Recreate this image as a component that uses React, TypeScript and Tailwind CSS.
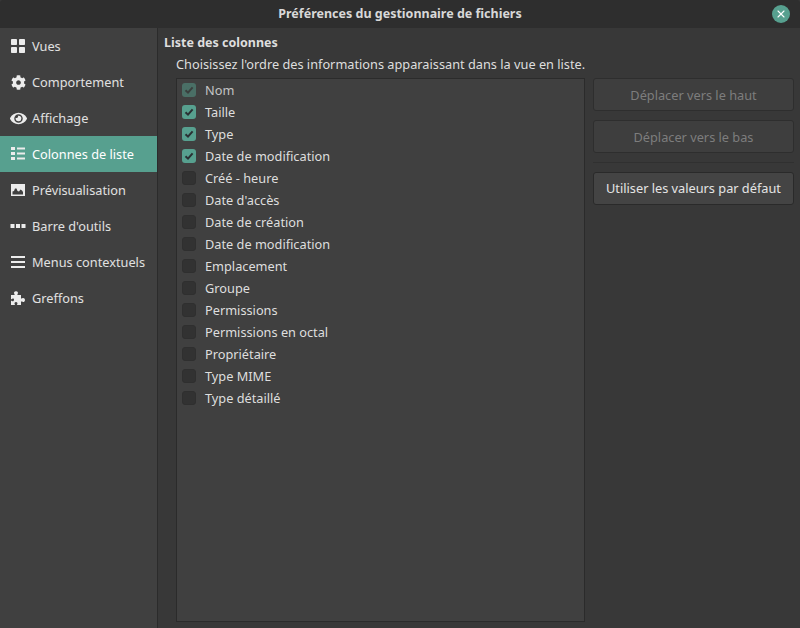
import { FaCog, FaEye } from 'react-icons/fa'
import { X } from 'lucide-react'
import type { ReactNode } from 'react'

const GridIcon = () => (
  <svg width="16" height="16" viewBox="0 0 16 16" fill="currentColor">
    <rect x="1" y="1" width="6" height="6" rx="0.8" />
    <rect x="9" y="1" width="6" height="6" rx="0.8" />
    <rect x="1" y="9" width="6" height="6" rx="0.8" />
    <rect x="9" y="9" width="6" height="6" rx="0.8" />
  </svg>
)

const ListIcon = () => (
  <svg width="16" height="16" viewBox="0 0 16 16" fill="currentColor">
    <rect x="1" y="1" width="4" height="3" />
    <rect x="7" y="1.500" width="8" height="2" />
    <rect x="1" y="6" width="4" height="3" />
    <rect x="7" y="6.500" width="8" height="2" />
    <rect x="1" y="11" width="4" height="3" />
    <rect x="7" y="11.500" width="8" height="2" />
  </svg>
)

const ImageIcon = () => (
  <svg width="16" height="16" viewBox="0 0 16 16">
    <rect x="1" y="2" width="14" height="12" fill="currentColor" />
    <path d="M2.500 12.500V9.500L4 9l1-2.500h1.500L7.500 9l1.500.500 1.500-2 1.500 1 1 1.500v2.500z" fill="#404040" />
  </svg>
)

const DotsIcon = () => (
  <svg width="16" height="16" viewBox="0 0 16 16" fill="currentColor">
    <rect x="0.500" y="6" width="4" height="4" />
    <rect x="6" y="6" width="4" height="4" />
    <rect x="11.500" y="6" width="4" height="4" />
  </svg>
)

const MenuIcon = () => (
  <svg width="16" height="16" viewBox="0 0 16 16" fill="currentColor">
    <rect x="1" y="2" width="14" height="2" />
    <rect x="1" y="7" width="14" height="2" />
    <rect x="1" y="12" width="14" height="2" />
  </svg>
)

const PuzzleIcon = () => (
  <svg width="16" height="16" viewBox="0 0 16 16" fill="currentColor">
    <path d="M1 5h3.200c.5 0 .5-.5.2-1-.9-1.200-.3-2.800 1.600-2.800s2.500 1.600 1.600 2.800c-.3.500-.3 1 .2 1H11v3.200c0 .5.500.5 1 .2 1.200-.9 3-.3 3 1.600s-1.800 2.500-3 1.600c-.5-.3-1-.3-1 .2V15H7.500c-.5 0-.5-.5-.2-1 .6-1-.1-2-1.300-2s-1.900 1-1.300 2c.3.500.3 1-.2 1H1v-3.800c0-.5.500-.5 1-.2 1 .6 2 0 2-1.300S3 8.400 2 9c-.5.300-1 .3-1-.2z" />
  </svg>
)

const sidebarItems: { label: string; icon: ReactNode; active?: boolean }[] = [
  { label: 'Vues', icon: <GridIcon /> },
  { label: 'Comportement', icon: <FaCog size={15} /> },
  { label: 'Affichage', icon: <FaEye size={17} /> },
  { label: 'Colonnes de liste', icon: <ListIcon />, active: true },
  { label: 'Prévisualisation', icon: <ImageIcon /> },
  { label: "Barre d'outils", icon: <DotsIcon /> },
  { label: 'Menus contextuels', icon: <MenuIcon /> },
  { label: 'Greffons', icon: <PuzzleIcon /> },
]

const columns: { label: string; checked?: boolean; locked?: boolean }[] = [
  { label: 'Nom', checked: true, locked: true },
  { label: 'Taille', checked: true },
  { label: 'Type', checked: true },
  { label: 'Date de modification', checked: true },
  { label: 'Créé - heure' },
  { label: "Date d'accès" },
  { label: 'Date de création' },
  { label: 'Date de modification' },
  { label: 'Emplacement' },
  { label: 'Groupe' },
  { label: 'Permissions' },
  { label: 'Permissions en octal' },
  { label: 'Propriétaire' },
  { label: 'Type MIME' },
  { label: 'Type détaillé' },
]

function Checkbox({ checked, locked }: { checked?: boolean; locked?: boolean }) {
  if (!checked) {
    return <div className="h-[14px] w-[14px] rounded-[3px] border border-[#2f2f2f] bg-[#323232]" />
  }
  return (
    <div className={`flex h-[14px] w-[14px] items-center justify-center rounded-[3px] ${locked ? 'bg-[#4a6f66]' : 'bg-[#57a08f]'}`}>
      <svg width="10" height="10" viewBox="0 0 10 10" fill="none" stroke={locked ? '#3a3f3e' : '#2a3033'} strokeWidth="2">
        <path d="M1.500 5.200 4 7.600 8.600 2.400" />
      </svg>
    </div>
  )
}

export default function App() {
  return (
    <div className="flex h-[628px] w-[800px] flex-col overflow-hidden bg-[#383838] font-['Noto_Sans',sans-serif] text-[12.75px] text-[#dedede]">
      <div className="relative flex h-[28px] shrink-0 items-center justify-center rounded-t-[3px] bg-[#2e2e2e] text-[12.5px] font-bold text-[#d8d8d8]">
        Préférences du gestionnaire de fichiers
        <div className="absolute right-[10px] top-[5px] flex h-[18px] w-[18px] items-center justify-center rounded-full bg-[#57a08f] text-white">
          <X size={12} strokeWidth={2.2} />
        </div>
      </div>

      <div className="flex min-h-0 flex-1">
        <div className="w-[158px] shrink-0 border-r border-[#2b2b2b] bg-[#404040]">
          {sidebarItems.map((item) => (
            <div
              key={item.label}
              className={`flex h-[36px] items-center ${item.active ? 'bg-[#57a08f] text-white' : 'text-[#e0e0e0]'}`}
            >
              <div className="flex w-[32px] justify-center pl-[6px] pr-[2px] text-[#ececec]">{item.icon}</div>
              <span className="pt-[2px]">{item.label}</span>
            </div>
          ))}
        </div>

        <div className="flex min-w-0 flex-1 flex-col p-[6px]">
          <div className="h-[18px] text-[12.5px] font-bold leading-[18px] text-[#dedede]">Liste des colonnes</div>
          <div className="mt-[3px] h-[18px] pl-[12px] leading-[18px]">
            Choisissez l'ordre des informations apparaissant dans la vue en liste.
          </div>
          <div className="mt-[5px] flex min-h-0 flex-1 gap-[8px] pl-[12px]">
            <div className="w-[409px] shrink-0 border border-[#2b2b2b] bg-[#404040]">
              {columns.map((col, i) => (
                <div key={i} className="flex h-[22px] items-center pl-[5px]">
                  <Checkbox checked={col.checked} locked={col.locked} />
                  <span className={`ml-[9px] pt-[2px] ${col.locked ? 'text-[#c4c4c4]' : ''}`}>{col.label}</span>
                </div>
              ))}
            </div>
            <div className="flex w-[201px] flex-col">
              <button className="h-[33px] rounded-[3px] border border-[#2e2e2e] bg-[#3e3e3e] pt-[2px] text-[#7d7d7d]">
                Déplacer vers le haut
              </button>
              <button className="mt-[9px] h-[33px] rounded-[3px] border border-[#2e2e2e] bg-[#3e3e3e] pt-[2px] text-[#7d7d7d]">
                Déplacer vers le bas
              </button>
              <div className="mt-[9px] h-px bg-[#303030]" />
              <button className="mt-[9px] h-[33px] rounded-[3px] border border-[#2a2a2a] bg-[#444444] text-[#e4e4e4]">
                Utiliser les valeurs par défaut
              </button>
            </div>
          </div>
        </div>
      </div>
    </div>
  )
}
